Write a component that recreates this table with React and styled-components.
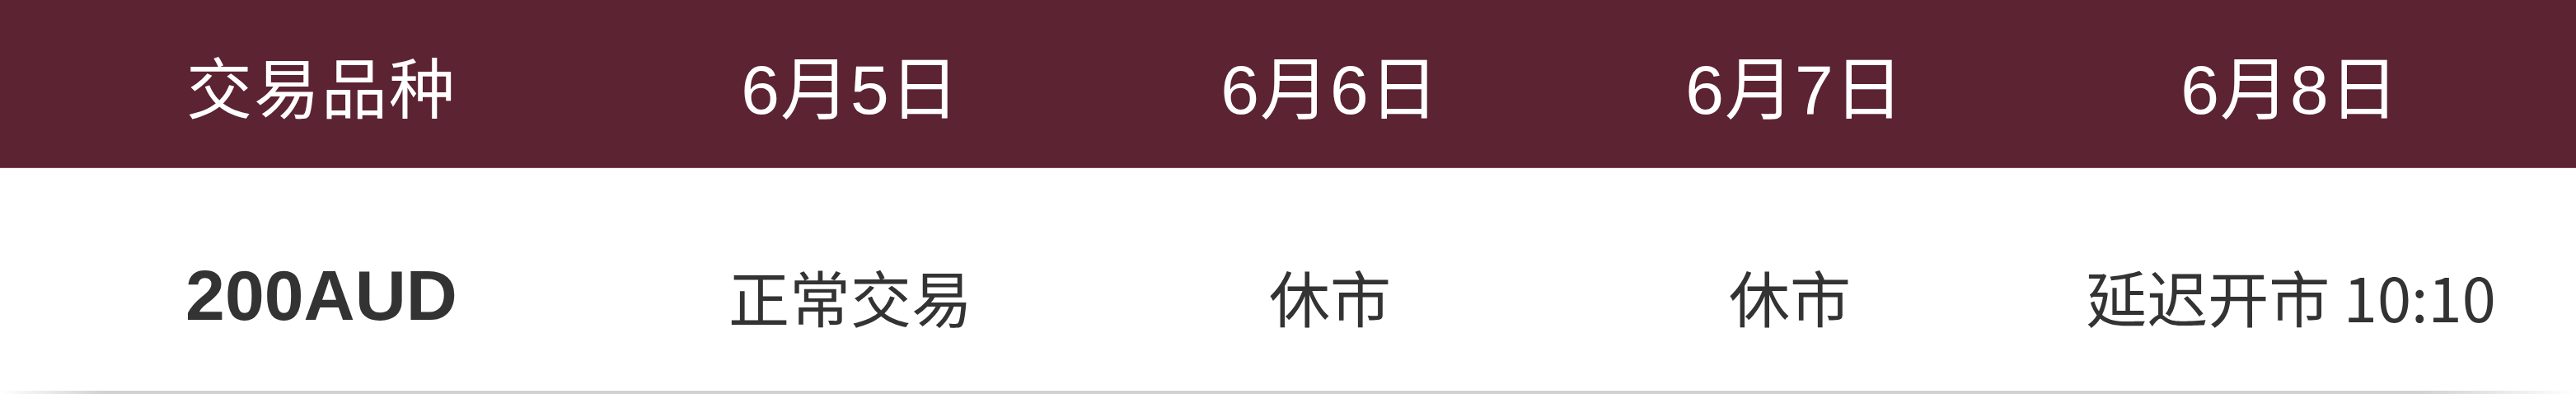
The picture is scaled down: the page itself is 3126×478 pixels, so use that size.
import React from 'react';
import styled, { createGlobalStyle } from 'styled-components';

const GlobalStyle = createGlobalStyle`
  html, body {
    margin: 0;
    padding: 0;
    background: #fff;
  }
  body {
    font-family: "Liberation Sans", "Noto Sans CJK SC", sans-serif;
  }
`;

const COLUMNS = '780px 504px 660px 456px 1fr';

const Table = styled.div`
  width: 3126px;
  display: flex;
  flex-direction: column;
`;

const HeaderRow = styled.div`
  display: grid;
  grid-template-columns: ${COLUMNS};
  height: 204px;
  background: #5c2333;
  border-bottom: 1px solid #7e4c5b;
  box-sizing: border-box;
`;

const HeadCell = styled.div`
  display: flex;
  align-items: center;
  justify-content: center;
  padding-left: ${p => p.$shift || 0}px;
  color: #fff;
  font-size: ${p => (p.$cjk ? '80px' : '84px')};
  font-family: ${p => (p.$cjk ? '"Noto Sans CJK SC"' : '"Liberation Sans", "Noto Sans CJK SC"')}, sans-serif;
  letter-spacing: ${p => (p.$cjk ? '2px' : '1px')};
  white-space: nowrap;
`;

const BodyRow = styled.div`
  display: grid;
  grid-template-columns: ${COLUMNS};
  height: 270px;
  padding-top: 38px;
  box-sizing: border-box;
`;

const Cell = styled.div`
  display: flex;
  align-items: center;
  justify-content: center;
  padding-left: ${p => p.$shift || 0}px;
  color: #333;
  white-space: nowrap;
  font-size: ${p => (p.$bold ? '86px' : '74px')};
  font-weight: ${p => (p.$bold ? 700 : 400)};
  font-family: ${p => (p.$bold ? '"Liberation Sans"' : '"Noto Sans CJK SC"')}, sans-serif;
`;

const Shadow = styled.div`
  height: 4px;
  background: linear-gradient(
    to right,
    rgba(200, 200, 200, 0) 0%,
    rgba(210, 210, 210, 1) 4%,
    rgba(210, 210, 210, 1) 94%,
    rgba(200, 200, 200, 0) 100%
  );
`;

const dates = ['6月5日', '6月6日', '6月7日', '6月8日'];
const headShift = [0, 0, 12, 32];
const statuses = ['正常交易', '休市', '休市', '延迟开市 10:10'];
const cellShift = [0, 0, 0, 34];

export default function App() {
  return (
    <>
      <GlobalStyle />
      <Table>
        <HeaderRow>
          <HeadCell $cjk>交易品种</HeadCell>
          {dates.map((d, i) => (
            <HeadCell key={d} $shift={headShift[i]}>{d}</HeadCell>
          ))}
        </HeaderRow>
        <BodyRow>
          <Cell $bold>200AUD</Cell>
          {statuses.map((s, i) => (
            <Cell key={i} $shift={cellShift[i]}>{s}</Cell>
          ))}
        </BodyRow>
        <Shadow />
      </Table>
    </>
  );
}
